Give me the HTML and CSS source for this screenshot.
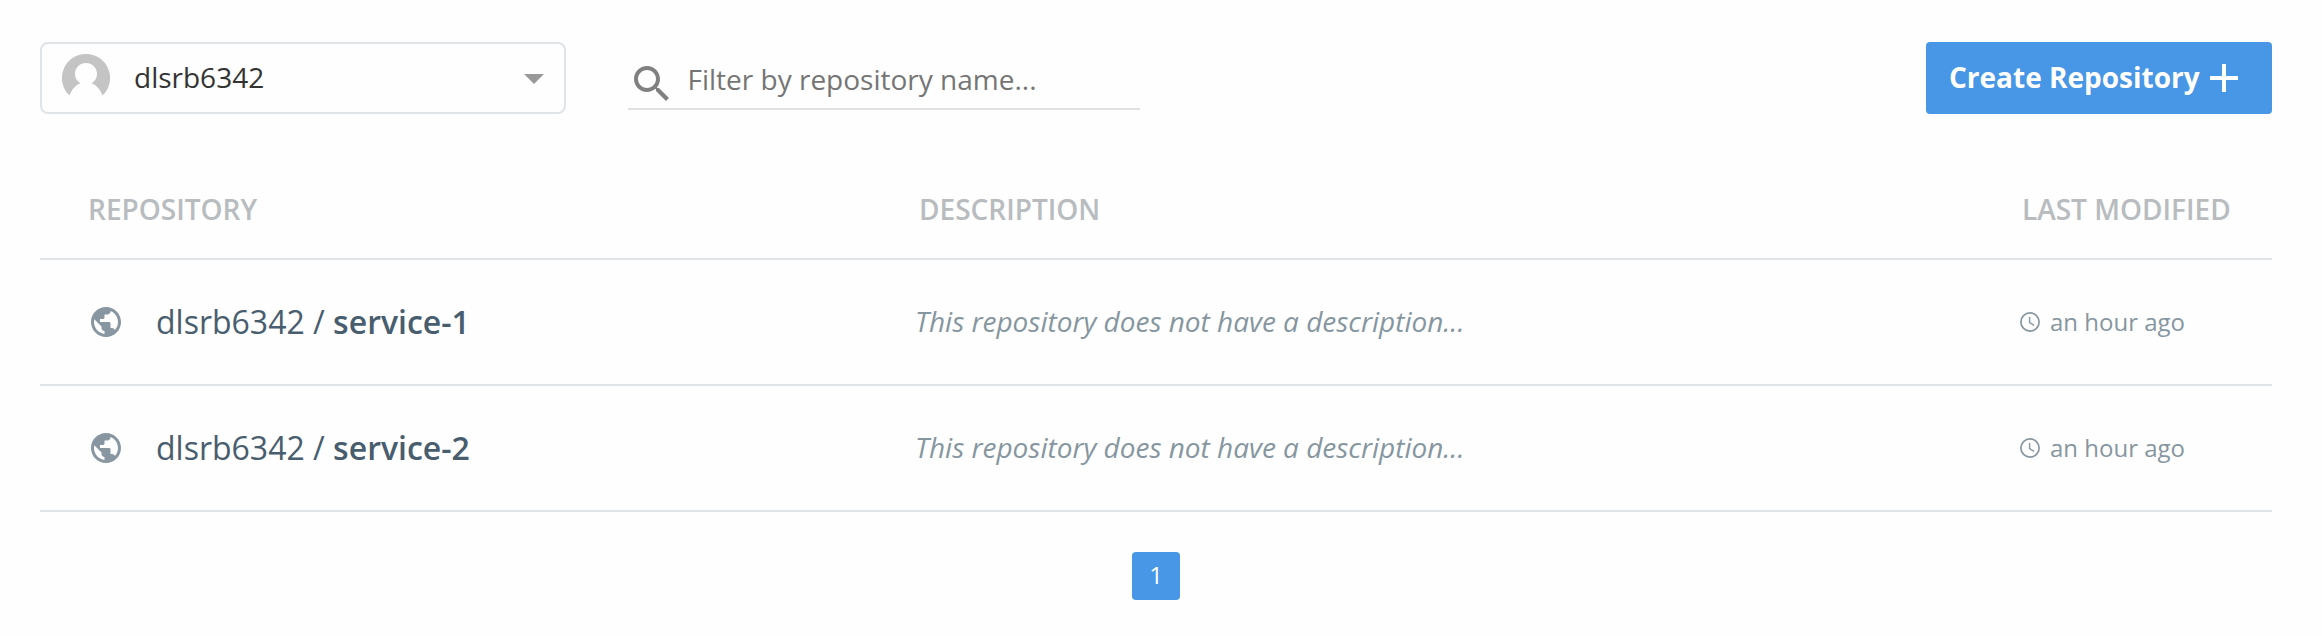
FILE: index.html
```html
<!DOCTYPE html>
<html lang="en">
<head>
<meta charset="utf-8">
<title>Repositories</title>
<link rel="stylesheet" href="styles.css">
</head>
<body>
<svg width="0" height="0" class="sprite">
  <symbol id="globe" viewBox="0 0 24 24"><path d="M12 2C6.48 2 2 6.48 2 12s4.48 10 10 10 10-4.480 10-10S17.520 2 12 2zm-1 17.930c-3.950-.490-7-3.850-7-7.930 0-.620.080-1.210.210-1.790L9 15v1c0 1.100.900 2 2 2v1.930zm6.900-2.540c-.260-.810-1-1.390-1.900-1.390h-1v-3c0-.550-.450-1-1-1H8v-2h2c.550 0 1-.450 1-1V7h2c1.100 0 2-.900 2-2v-.410c2.930 1.190 5 4.060 5 7.410 0 2.080-.800 3.970-2.100 5.390z"/></symbol>
  <symbol id="clock" viewBox="0 0 20 20"><circle cx="10" cy="10" r="9.100" fill="none" stroke="currentColor" stroke-width="1.700"/><path d="M9.600 5v5.700l4.600 2.600" fill="none" stroke="currentColor" stroke-width="1.400"/></symbol>
</svg>
<main class="page">
  <header class="toolbar">
    <div class="select">
      <svg class="avatar" viewBox="0 0 48 48"><path d="M24 0A24 24 0 0 0 7.500 41.500C9.500 36 13 31.500 18.300 29.200C14.800 27 13 23.800 13 20C13 13.500 18 9 24 9S35 13.500 35 20C35 23.800 33.200 27 29.700 29.200C35 31.500 38.500 36 40.500 41.500A24 24 0 0 0 24 0z"/></svg>
      <span class="owner">dlsrb6342</span>
      <span class="caret"></span>
    </div>
    <div class="filter">
      <svg class="search" viewBox="0 0 24 24"><path d="M15.500 14h-.790l-.280-.270C15.410 12.590 16 11.110 16 9.500 16 5.910 13.090 3 9.500 3S3 5.910 3 9.500 5.910 16 9.500 16c1.610 0 3.090-.590 4.230-1.570l.270.280v.790l5 4.990L20.490 19l-4.990-5zm-6 0C7.010 14 5 11.990 5 9.500S7.010 5 9.500 5 14 7.010 14 9.500 11.990 14 9.500 14z"/></svg>
      <span>Filter by repository name...</span>
    </div>
    <button class="create"><span>Create Repository</span><svg class="plus" viewBox="0 0 28 28"><path d="M12 0h4v12h12v4H16v12h-4V16H0v-4h12z"/></svg></button>
  </header>
  <section class="table">
    <div class="row head"><span>REPOSITORY</span><span>DESCRIPTION</span><span>LAST MODIFIED</span></div>
    <div class="row item">
      <div class="repo"><svg class="globe"><use href="#globe"/></svg><span>dlsrb6342 / <b>service-1</b></span></div>
      <div class="desc">This repository does not have a description...</div>
      <div class="time"><svg class="clock"><use href="#clock"/></svg><span>an hour ago</span></div>
    </div>
    <div class="row item">
      <div class="repo"><svg class="globe"><use href="#globe"/></svg><span>dlsrb6342 / <b>service-2</b></span></div>
      <div class="desc">This repository does not have a description...</div>
      <div class="time"><svg class="clock"><use href="#clock"/></svg><span>an hour ago</span></div>
    </div>
  </section>
  <nav class="pager"><span class="current">1</span></nav>
</main>
</body>
</html>
```
FILE: styles.css
```css
* { box-sizing: border-box; }
body { margin: 0; background: #fefefe; font-family: "Open Sans", "Noto Sans", sans-serif; font-size: 28px; }
svg { display: block; flex: none; fill: currentColor; }
.sprite { display: none; }
.page { height: 636px; padding: 42px 50px 0 40px; }
.toolbar { display: flex; height: 72px; }
.select { display: flex; align-items: center; width: 526px; padding: 0 20px; border: 2px solid #dfe4e8; border-radius: 8px; color: #333; }
.avatar { width: 48px; height: 48px; color: #c4c4c4; }
.owner { flex: 1; margin-left: 24px; line-height: 38px; padding-bottom: 2px; }
.caret { border: 10px solid transparent; border-top-color: #999; border-bottom: 0; margin-top: 1px; }
.filter { display: flex; align-items: center; width: 512px; height: 68px; margin-left: 62px; padding-top: 4px; border-bottom: 2px solid #e0e0e0; color: #757575; }
.search { width: 48px; height: 48px; margin-top: 14px; color: #808080; }
.filter span { margin: 4px 0 0 11.5px; }
.create { display: flex; align-items: center; width: 346px; margin-left: auto; padding: 0 0 0 23px; border: 0; border-radius: 4px; background: #4896e6; color: #fff; font: 700 28px "Open Sans", sans-serif; }
.create span { padding-bottom: 2px; }
.plus { width: 28px; height: 28px; margin-left: 10px; }
.table { margin-top: 46px; }
.row { display: grid; grid-template-columns: 875px 1105px 1fr; align-items: center; border-bottom: 2px solid #dfe4e8; }
.head { height: 100px; color: #b8bcbf; font-weight: 600; grid-template-columns: 831px 1103px 1fr; padding-left: 48px; }
.item { height: 126px; color: #8696a0; }
.repo { display: flex; align-items: center; padding-left: 48px; font-size: 32px; color: #485d6e; }
.repo span, .desc, .time span { padding-bottom: 2px; }
.repo b { font-weight: 600; }
.globe { width: 36px; height: 36px; margin-right: 32px; color: #8796a0; }
.desc { font-style: italic; letter-spacing: -0.015px; }
.time { display: flex; align-items: center; font-size: 24px; }
.clock { width: 20px; height: 20px; margin-right: 10px; }
.pager { display: flex; justify-content: center; margin-top: 40px; }
.current { width: 48px; height: 48px; border-radius: 4px; background: #4896e6; color: #fff; font-size: 24px; line-height: 46px; text-align: center; }
```
